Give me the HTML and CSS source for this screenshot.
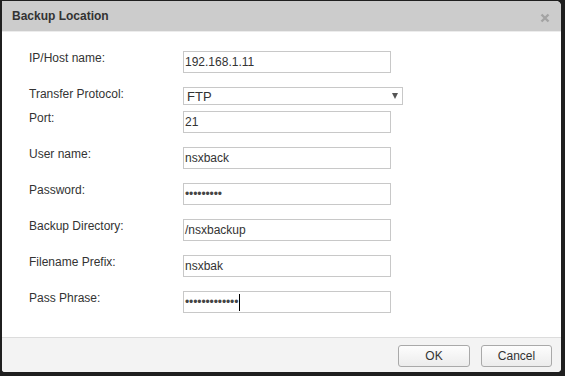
FILE: index.html
```html
<!DOCTYPE html>
<html>
<head>
<meta charset="utf-8">
<link rel="stylesheet" href="styles.css">
</head>
<body>
<div class="dialog">
  <div class="header">
    <span class="title">Backup Location</span>
    <svg class="close" width="10" height="10" viewBox="0 0 10 10"><path d="M1.5 1.5L8.5 8.5M8.5 1.5L1.5 8.5" stroke="#a3a3a3" stroke-width="2.4" stroke-linecap="butt"/></svg>
  </div>
  <div class="body">
    <div class="row"><div class="label">IP/Host name:</div><div class="field">192.168.1.11</div></div>
    <div class="row row-select"><div class="label">Transfer Protocol:</div><div class="select"><span>FTP</span><span class="arrow"></span></div></div>
    <div class="row"><div class="label">Port:</div><div class="field">21</div></div>
    <div class="row"><div class="label">User name:</div><div class="field">nsxback</div></div>
    <div class="row"><div class="label">Password:</div><div class="field dots">•••••••••</div></div>
    <div class="row"><div class="label">Backup Directory:</div><div class="field">/nsxbackup</div></div>
    <div class="row"><div class="label">Filename Prefix:</div><div class="field">nsxbak</div></div>
    <div class="row"><div class="label">Pass Phrase:</div><div class="field dots">•••••••••••••<span class="caret"></span></div></div>
  </div>
  <div class="footer">
    <button class="btn btn-ok">OK</button>
    <button class="btn btn-cancel">Cancel</button>
  </div>
</div>
</body>
</html>
```
FILE: styles.css
```css
html, body {
  margin: 0;
  padding: 0;
  background: #1f1f1f;
  width: 565px;
  height: 376px;
  overflow: hidden;
  font-family: "Liberation Sans", Arial, sans-serif;
  font-size: 12px;
  color: #333;
}
.dialog {
  margin: 1px 0 0 2px;
  width: 559px;
  height: 371px;
  background: #fff;
  border-radius: 0 5px 4px 3px;
  overflow: hidden;
  display: flex;
  flex-direction: column;
}
.header {
  height: 30px;
  flex: none;
  background: #cccccc;
  border-bottom: 1px solid #ececec;
  display: flex;
  align-items: center;
  justify-content: space-between;
  padding: 0 11px 0 10px;
}
.title {
  font-weight: bold;
  font-size: 12px;
  color: #333;
  line-height: 30px;
}
.close {
  display: block;
  margin-top: 3px;
}
.body {
  flex: 1;
  padding: 19px 0 0 27px;
}
.row {
  display: flex;
  align-items: flex-start;
  margin-bottom: 14px;
}
.row-select {
  margin-bottom: 6px;
}
.label {
  width: 154px;
  line-height: 14px;
  padding-top: 0;
  color: #333;
}
.field {
  box-sizing: border-box;
  width: 208px;
  height: 22px;
  border: 1px solid #c8c8c8;
  padding: 0 1px;
  line-height: 20px;
  color: #333;
  white-space: nowrap;
  display: flex;
  align-items: center;
}
.dots {
  color: #444;
  letter-spacing: -0.1px;
}
.caret {
  display: inline-block;
  width: 1px;
  height: 17px;
  background: #000;
  margin-left: 1px;
}
.select {
  box-sizing: border-box;
  width: 220px;
  height: 18px;
  border: 1px solid #c8c8c8;
  padding: 0 4px 0 3px;
  display: flex;
  align-items: center;
  justify-content: space-between;
  font-size: 13px;
  color: #333;
}
.arrow {
  width: 0;
  height: 0;
  border-left: 3px solid transparent;
  border-right: 3px solid transparent;
  border-top: 6px solid #555;
}
.footer {
  box-sizing: border-box;
  flex: none;
  height: 35px;
  border-top: 1px solid #dcdcdc;
  background: #f3f3f3;
  display: flex;
  justify-content: flex-end;
  align-items: flex-start;
  gap: 11px;
  padding: 7px 9px 0 0;
}
.btn {
  box-sizing: border-box;
  height: 22px;
  border: 1px solid #a9a9a9;
  border-radius: 3px;
  background: linear-gradient(#fdfdfd, #ececec);
  font-family: "Liberation Sans", Arial, sans-serif;
  font-size: 12px;
  color: #333;
  padding: 0;
}
.btn-ok { width: 72px; }
.btn-cancel { width: 71px; }
```
